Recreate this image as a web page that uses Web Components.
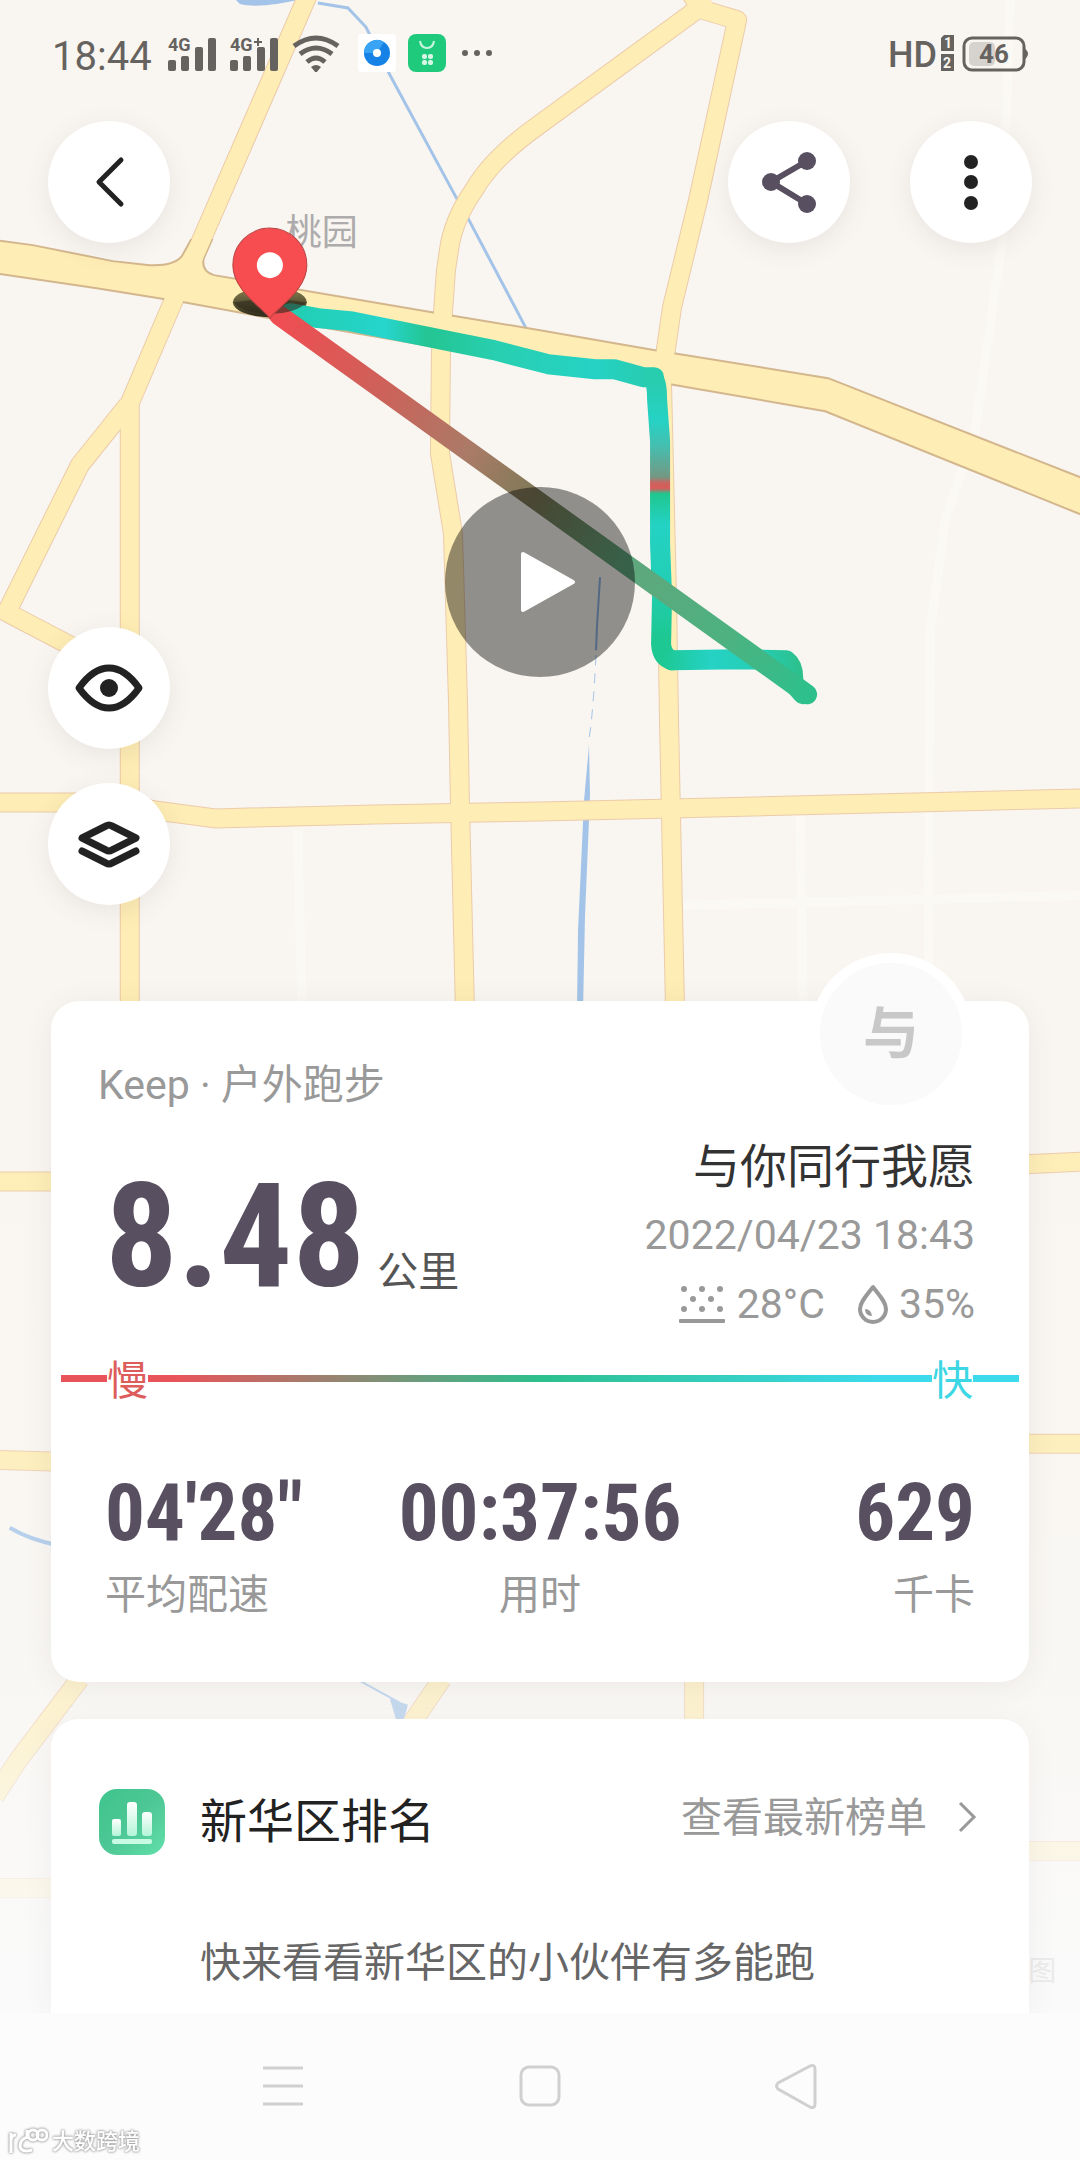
<!DOCTYPE html>
<html lang="zh-CN">
<head>
  <meta charset="utf-8">
  <meta name="viewport" content="width=device-width, initial-scale=1">
  <title>Keep · 户外跑步</title>
  <style>
    :root {
      --main-font-family: Roboto, "Noto Sans CJK SC", sans-serif;
      --number-font-family: "Roboto Condensed", Roboto, sans-serif;
      --main-text-color: #222;
      --soft-text-color: #999;
      --number-color: #584f60;
      --card-color: #fff;
    }

    body {
      margin: 0;
      font-family: var(--main-font-family);
      color: var(--main-text-color);
      background-color: #fcfcfc;
    }
  </style>
</head>
<body>
  <run-page>
    <run-map slot="map"></run-map>
    <status-bar slot="top"></status-bar>
    <tool-bar slot="top">
      <round-button label="返回">
        <svg viewBox="-61 -61 122 122"><path d="M12 -22L-10 0L12 22" fill="none" stroke="#222" stroke-width="5" stroke-linecap="round" stroke-linejoin="round"/></svg>
      </round-button>
      <round-button label="分享" slot="end">
        <svg viewBox="-61 -61 122 122" fill="#584f60"><path d="M18 -21L-18 0L18 22" fill="none" stroke="#584f60" stroke-width="6"/><circle cx="-18" r="9"/><circle cx="18" cy="-21" r="9"/><circle cx="18" cy="22" r="9"/></svg>
      </round-button>
      <round-button label="更多" slot="end">
        <svg viewBox="-61 -61 122 122" fill="#222"><circle cy="-20" r="7"/><circle r="7"/><circle cy="21" r="7"/></svg>
      </round-button>
    </tool-bar>
    <map-stage>
      <round-button label="显示地图">
        <svg viewBox="-61 -61 122 122"><path d="M-30 0C-20 -14 -10 -20 0 -20S20 -14 30 0C20 14 10 20 0 20S-20 14 -30 0Z" fill="none" stroke="#222" stroke-width="7" stroke-linejoin="round"/><circle r="9" fill="#222"/></svg>
      </round-button>
      <round-button label="图层">
        <svg viewBox="-61 -61 122 122" fill="none" stroke="#222" stroke-width="7" stroke-linecap="round" stroke-linejoin="round"><path d="M-27 -6L-3 -18Q0 -20 3 -18L27 -6L3 6Q0 8 -3 6Z"/><path d="M-27 7L-3 19Q0 21 3 19L27 7"/></svg>
      </round-button>
    </map-stage>
    <summary-card avatar="与">
      <span slot="source">Keep · 户外跑步</span>
      <span slot="distance">8.48</span>
      <span slot="unit">公里</span>
      <span slot="name">与你同行我愿</span>
      <span slot="date">2022/04/23 18:43</span>
      <span slot="temperature">28°C</span>
      <span slot="humidity">35%</span>
      <stat-item slot="stats">04'28"<span slot="label">平均配速</span></stat-item>
      <stat-item slot="stats" class="middle">00:37:56<span slot="label">用时</span></stat-item>
      <stat-item slot="stats" class="last">629<span slot="label">千卡</span></stat-item>
    </summary-card>
    <rank-card>
      <span slot="title">新华区排名</span>
      <span slot="link">查看最新榜单</span>
      快来看看新华区的小伙伴有多能跑
    </rank-card>
    <nav-bar slot="bottom"></nav-bar>
  </run-page>

  <script>
    class RunPage extends HTMLElement {
      constructor() {
        super();
        this._root = this.attachShadow({ mode: 'open' });
        this._root.innerHTML = `<style>
          :host {
            display: flex;
            flex-direction: column;
            min-height: 100vh;
          }
          .screen {
            position: relative;
            flex: 1;
            display: flex;
            flex-direction: column;
            overflow: hidden;
          }
          /* the map lies under everything else */
          .under {
            position: absolute;
            inset: 0;
          }
          .over {
            position: relative;
            flex: 1;
            display: flex;
            flex-direction: column;
          }
        </style>
        <div class="screen">
          <div class="under"><slot name="map"></slot></div>
          <main class="over">
            <slot name="top"></slot>
            <slot></slot>
          </main>
        </div>
        <slot name="bottom"></slot>`;
      }
    }
    window.customElements.define('run-page', RunPage);


    class RunMap extends HTMLElement {
      constructor() {
        super();
        this._root = this.attachShadow({ mode: 'open' });
        this._root.innerHTML = `<style>
          :host {
            display: block;
            height: 100%;
            background-color: #f9f6f1;
          }
          svg {
            display: block;
            width: 100%;
            height: 100%;
          }
          .label {
            font-family: var(--main-font-family);
            font-size: 36px;
          }
          .edge { stroke: #eccbab; fill: none; }
          .road { stroke: #feedb4; fill: none; }
        </style>
        <svg viewBox="0 0 1080 2012" preserveAspectRatio="xMidYMin slice" role="img" aria-label="跑步路线">
          <defs>
            <g id="roads" stroke-linejoin="round">
              <path d="M308 -5L192 262L173 302L130 403V1010"/>
              <path d="M128 405L80 465L7 612L72 646L132 676"/>
              <path d="M690 -8L700 9L737 20L698 200L672 307L665 355L662 385L667 600L669 723L675 1010"/>
              <path d="M710 0L540 124Q492 158 474 190Q453 220 449 250L446 270L443 313L441 353L440 453L453 533L458 700L460 803L465 1010"/>
              <path d="M-5 802H110L155 810L215 818L375 814L540 811L672 808L1085 798"/>
              <path d="M-5 1181H60M-5 1459L60 1461M1020 1164L1085 1161M1020 1443H1085"/>
              <path d="M80 1678L18 1760L-5 1795M442 1678L412 1722M694 1678V1722"/>
              <path d="M-5 1887H60M1020 1850H1085"/>
            </g>
            <linearGradient id="fade" x1="0" y1="1000" x2="0" y2="2012" gradientUnits="userSpaceOnUse">
              <stop offset="0" stop-color="#fafafa" stop-opacity="0"/>
              <stop offset=".4" stop-color="#fafafa" stop-opacity=".1"/>
              <stop offset=".7" stop-color="#fafafa" stop-opacity=".4"/>
              <stop offset=".9" stop-color="#fafafa" stop-opacity=".85"/>
              <stop offset="1" stop-color="#fafafa"/>
            </linearGradient>
            <linearGradient id="east" x1="300" y1="0" x2="655" y2="0" gradientUnits="userSpaceOnUse">
              <stop offset="0" stop-color="#22ceb4"/>
              <stop offset=".24" stop-color="#26d5cc"/>
              <stop offset=".36" stop-color="#24c592"/>
              <stop offset=".55" stop-color="#28cfb0"/>
              <stop offset=".83" stop-color="#25d2c4"/>
              <stop offset="1" stop-color="#28ccae"/>
            </linearGradient>
            <linearGradient id="south" x1="0" y1="378" x2="0" y2="660" gradientUnits="userSpaceOnUse">
              <stop offset="0" stop-color="#28ccae"/>
              <stop offset=".15" stop-color="#25d2c4"/>
              <stop offset=".24" stop-color="#45bfb0"/>
              <stop offset=".35" stop-color="#739883"/>
              <stop offset=".37" stop-color="#c96560"/>
              <stop offset=".39" stop-color="#d85c5a"/>
              <stop offset=".41" stop-color="#1fc78f"/>
              <stop offset=".52" stop-color="#24d2c4"/>
              <stop offset=".72" stop-color="#22ceb4"/>
              <stop offset=".92" stop-color="#1dc893"/>
            </linearGradient>
            <linearGradient id="finish" x1="662" y1="0" x2="800" y2="0" gradientUnits="userSpaceOnUse">
              <stop offset="0" stop-color="#1dc893"/>
              <stop offset=".35" stop-color="#25d2c4"/>
              <stop offset=".7" stop-color="#25cdb4"/>
              <stop offset="1" stop-color="#2dc08d"/>
            </linearGradient>
            <linearGradient id="direct" x1="280" y1="316" x2="807" y2="694" gradientUnits="userSpaceOnUse">
              <stop offset="0" stop-color="#f04d52"/>
              <stop offset=".2" stop-color="#cc625a"/>
              <stop offset=".36" stop-color="#aa7b67"/>
              <stop offset=".48" stop-color="#7e7a58"/>
              <stop offset=".65" stop-color="#61a67d"/>
              <stop offset=".85" stop-color="#4db280"/>
              <stop offset="1" stop-color="#2dc08d"/>
            </linearGradient>
            <linearGradient id="shade" x1="0" y1="0" x2="0" y2="1">
              <stop offset="0" stop-color="#8b8252"/>
              <stop offset="1" stop-color="#2d291a"/>
            </linearGradient>
          </defs>

          <g fill="none" stroke="#fbf9f4" stroke-width="9">
            <path d="M1010 0L1002 240L975 430L945 520L930 630L928 1010"/>
            <path d="M298 830L302 1010M800 815L803 1010M680 905L1080 895"/>
          </g>

          <g fill="none" stroke="#a3c4e8">
            <path d="M236 0H298C280 4 255 8 240 4Z" fill="#a3c4e8" stroke="none"/>
            <path d="M318 3L348 8L366 27L390 75L456 197L468 218L526 328" stroke-width="3"/>
            <path d="M600 577L597 625L596 650" stroke="#8fb4e0" stroke-width="2"/>
            <path d="M596 655L594 690L591 725L588 745" stroke-width="1" stroke-dasharray="10 8"/>
            <path d="M589 745L590 795L585 915L583 1010H577L578 930L584 800Z" fill="#a3c4e8" stroke="none"/>
            <path d="M10 1527Q30 1539 60 1545" stroke-width="4"/>
            <path d="M360 1680L400 1702" stroke-width="2"/>
            <path d="M390 1698L408 1704L403 1722H397Z" fill="#a3c4e8" stroke="none"/>
          </g>

          <use href="#roads" class="edge" stroke-width="20"/>
          <path d="M-5 240L33 245L113 261L150 265Q174 266 182 256L191 240H212L204 258Q201 271 214 275L432 312L540 330L655 350L828 378L1085 479V516L825 411L670 384L540 365L270 318L184 302L97 288L-5 273Z" fill="#feedb4" stroke="#d3b68d" stroke-width="2"/>
          <use href="#roads" class="road" stroke-width="18"/>

          <rect y="1000" width="1080" height="1012" fill="url(#fade)"/>

          <text class="label" x="286" y="245" fill="#adabac">桃园</text>
          <text x="1028" y="1980" fill="#ebebeb" font-size="28" font-family="Noto Sans CJK SC, sans-serif">图</text>

          <ellipse cx="270" cy="302" rx="37" ry="15" fill="url(#shade)"/>
          <g fill="none" stroke-width="20" stroke-linecap="round" stroke-linejoin="round">
            <path d="M290 313L318 318L350 321L444 340L494 350L548 364L595 369L614 369L643 377H654" stroke="url(#east)"/>
            <path d="M652 378Q657 380 657 399L660 441V544L662 596L661 644Q662 657 672 660" stroke="url(#south)"/>
            <path d="M672 660L738 659L786 660Q794 666 793 681L795 685L803 694" stroke="url(#finish)"/>
            <path d="M279 315L807 694" stroke="url(#direct)"/>
          </g>
          <path d="M234 302A37 15 0 0 0 306 302L290 300H250Z" fill="#2d291a" opacity=".6"/>
          <path d="M270 318C262 307 233 290 233 265A37 37 0 0 1 307 265C307 290 278 307 270 318Z" fill="#f84d50" stroke="#ba4344" stroke-width="1"/>
          <circle cx="270" cy="265" r="13" fill="#fff"/>
        </svg>`;
      }
    }
    window.customElements.define('run-map', RunMap);


    class StatusBar extends HTMLElement {
      constructor() {
        super();
        this._root = this.attachShadow({ mode: 'open' });
        this._root.innerHTML = `<style>
          :host {
            display: flex;
            justify-content: space-between;
            align-items: center;
            height: 40px;
            padding: 33px 51px 48px 52px;
            color: #66625f;
          }
          div {
            display: flex;
            align-items: center;
            gap: 14px;
          }
          .apps { gap: 12px; margin-left: 4px; }
          .right { gap: 4px; }
          time {
            font-size: 40px;
            line-height: 48px;
            padding: 8px 2px 0 0;
          }
          svg { display: block; fill: currentColor; }
          text { font-family: Roboto, sans-serif; font-weight: 700; }
          .hd { font-size: 36px; line-height: 40px; font-weight: 500; padding-top: 4px; }
        </style>
        <div>
          <time>18:44</time>
          <svg width="48" height="38" viewBox="0 0 48 38">
            <text x="0" y="17" font-size="18">4G</text>
            <rect y="26" width="8" height="11" rx="2"/><rect x="13" y="22" width="8" height="15" rx="2"/><rect x="27" y="13" width="8" height="24" rx="2"/><rect x="40" y="4" width="8" height="33" rx="2"/>
          </svg>
          <svg width="48" height="38" viewBox="0 0 48 38">
            <text x="0" y="17" font-size="18">4G</text><path d="M24 7h3v-3h2v3h3v2h-3v3h-2v-3h-3z"/>
            <rect y="26" width="8" height="11" rx="2"/><rect x="13" y="22" width="8" height="15" rx="2"/><rect x="27" y="13" width="8" height="24" rx="2"/><rect x="40" y="4" width="8" height="33" rx="2"/>
          </svg>
          <svg width="48" height="38" viewBox="0 0 48 38">
            <g fill="none" stroke="currentColor" stroke-width="5"><path d="M2 12Q24 -4 46 12"/><path d="M8 20Q24 8 40 20"/><path d="M15 28Q24 20 33 28"/></g>
            <path d="M19 33Q24 29 29 33L24 39Z"/>
          </svg>
          <div class="apps">
            <svg width="38" height="38" viewBox="0 0 38 38"><rect width="38" height="38" rx="3" fill="#fff"/><circle cx="19" cy="19" r="13" fill="#1682e6"/><path d="M6 19a13 13 0 0 1 20 -11L19 19Z" fill="#38a4f3"/><circle cx="19" cy="19" r="4" fill="#fff"/></svg>
            <svg width="38" height="38" viewBox="0 0 38 38"><rect width="38" height="38" rx="8" fill="#20ca7c"/><path d="M12 7Q13 14 19 14T26 7" fill="none" stroke="#c9f5de" stroke-width="2"/><g fill="#d6f7e6"><rect x="14" y="20" width="5" height="5" rx="2"/><rect x="20" y="20" width="5" height="5" rx="2"/><rect x="14" y="26" width="5" height="5" rx="2"/><rect x="20" y="26" width="5" height="5" rx="2"/></g></svg>
            <svg width="38" height="38" viewBox="0 0 38 38"><circle cx="7" cy="19" r="3"/><circle cx="19" cy="19" r="3"/><circle cx="31" cy="19" r="3"/></svg>
          </div>
        </div>
        <div class="right">
          <span class="hd">HD</span>
          <svg width="13" height="38" viewBox="0 0 13 38"><path d="M3 1H13V17H0V4Z"/><rect y="20" width="13" height="17"/><g fill="#f9f6f1" font-size="14"><text x="3" y="14">1</text><text x="2" y="34">2</text></g></svg>
          <svg width="71" height="38" viewBox="0 0 71 38">
            <rect x="6" y="4" width="60" height="32" rx="8" fill="none" stroke="currentColor" stroke-width="3"/>
            <rect x="11" y="8" width="26" height="24" rx="5" fill="#d6d3cf"/>
            <path d="M67 16q4 4 0 8z" stroke="currentColor" stroke-width="2"/>
            <text x="36" y="29" font-size="26" text-anchor="middle">46</text>
          </svg>
        </div>`;
      }
    }
    window.customElements.define('status-bar', StatusBar);


    class ToolBar extends HTMLElement {
      constructor() {
        super();
        this._root = this.attachShadow({ mode: 'open' });
        this._root.innerHTML = `<style>
          :host {
            display: flex;
            justify-content: space-between;
            padding: 0 48px;
          }
          .end {
            display: flex;
            gap: 60px;
          }
        </style>
        <slot></slot>
        <div class="end"><slot name="end"></slot></div>`;
      }
    }
    window.customElements.define('tool-bar', ToolBar);


    class RoundButton extends HTMLElement {
      constructor() {
        super();
        this._root = this.attachShadow({ mode: 'open' });
        this._root.innerHTML = `<style>
          :host { display: block; }
          button {
            display: block;
            width: 122px;
            height: 122px;
            padding: 0;
            border: none;
            border-radius: 50%;
            background-color: #fff;
            box-shadow: 0 6px 26px rgba(90, 70, 80, .1);
          }
          ::slotted(svg) {
            display: block;
            width: 100%;
            height: 100%;
          }
        </style>
        <button type="button"><slot></slot></button>`;
      }

      connectedCallback() {
        this._root.querySelector('button').setAttribute('aria-label', this.getAttribute('label'));
      }
    }
    window.customElements.define('round-button', RoundButton);


    class MapStage extends HTMLElement {
      constructor() {
        super();
        this._root = this.attachShadow({ mode: 'open' });
        /* play button and side tools share the same grid cell */
        this._root.innerHTML = `<style>
          :host {
            display: grid;
            padding: 244px 48px 96px;
          }
          .play, .tools { grid-area: 1 / 1; }
          .play {
            justify-self: center;
            width: 190px;
            height: 190px;
            padding: 0;
            border: none;
            border-radius: 50%;
            background-color: rgba(0, 0, 0, .42);
          }
          .play svg { display: block; }
          .tools {
            justify-self: start;
            display: grid;
            gap: 34px;
            padding-top: 140px;
          }
        </style>
        <div class="tools"><slot></slot></div>
        <button class="play" type="button" aria-label="播放">
          <svg width="190" height="190" viewBox="0 0 190 190"><path d="M78 67L128 95L78 123Z" fill="#fff" stroke="#fff" stroke-width="4" stroke-linejoin="round"/></svg>
        </button>`;
      }
    }
    window.customElements.define('map-stage', MapStage);


    class SummaryCard extends HTMLElement {
      constructor() {
        super();
        this._root = this.attachShadow({ mode: 'open' });
        this._root.innerHTML = `<style>
          :host {
            display: block;
            position: relative;
            margin: 0 51px;
            padding: 54px 0 57px;
            border-radius: 28px;
            background-color: var(--card-color);
            box-shadow: 0 4px 30px rgba(80, 70, 70, .08);
          }
          .avatar {
            position: absolute;
            top: -48px;
            right: 57px;
            box-sizing: border-box;
            width: 162px;
            height: 162px;
            border: 10px solid #fff;
            border-radius: 50%;
            background-color: #fafafa;
            color: #c8c8c8;
            font-size: 56px;
            font-weight: 700;
            line-height: 142px;
            text-align: center;
          }
          .source {
            padding-left: 47px;
            font-size: 41px;
            line-height: 60px;
            color: var(--soft-text-color);
          }
          .main {
            display: flex;
            justify-content: space-between;
            padding: 18px 54px 0 54px;
          }
          .distance {
            display: flex;
            align-items: baseline;
            gap: 12px;
          }
          .number {
            font-family: var(--number-font-family);
            font-size: 144px;
            line-height: 208px;
            font-weight: 700;
            color: var(--number-color);
          }
          .unit { font-size: 41px; color: #555; }
          .info {
            text-align: right;
            font-size: 41px;
            line-height: 68px;
            color: var(--soft-text-color);
          }
          .name {
            font-size: 47px;
            color: #333;
          }
          .weather {
            display: flex;
            justify-content: flex-end;
            align-items: center;
            line-height: 70px;
          }
          .weather svg { display: block; margin-right: 12px; }
          .weather .drop { margin-left: 32px; margin-right: 10px; }
          .pace {
            display: flex;
            justify-content: space-between;
            margin: 10px 10px 0;
            padding: 0 46px;
            font-size: 41px;
            line-height: 60px;
            background: linear-gradient(90deg, #e9545a 12%, #2dc08d 50%, #3cdaea 85%) 0 24px / 100% 7px no-repeat;
          }
          .pace span { background-color: var(--card-color); }
          .slow { color: #dd5c5c; }
          .fast { color: #3cd6e4; }
          .stats {
            display: grid;
            grid-template-columns: 1fr auto 1fr;
            padding: 62px 54px 0 54px;
          }
        </style>
        <div class="avatar"></div>
        <div class="source"><slot name="source"></slot></div>
        <div class="main">
          <div class="distance">
            <span class="number"><slot name="distance"></slot></span>
            <span class="unit"><slot name="unit"></slot></span>
          </div>
          <div class="info">
            <div class="name"><slot name="name"></slot></div>
            <div><slot name="date"></slot></div>
            <div class="weather">
              <svg width="46" height="40" viewBox="0 0 46 40" fill="#999"><circle cx="5" cy="5" r="3"/><circle cx="23" cy="5" r="3"/><circle cx="41" cy="5" r="3"/><circle cx="14" cy="15" r="3"/><circle cx="32" cy="15" r="3"/><circle cx="5" cy="25" r="3"/><circle cx="23" cy="25" r="3"/><circle cx="41" cy="25" r="3"/><rect y="35" width="46" height="4" rx="1"/></svg>
              <slot name="temperature"></slot>
              <svg class="drop" width="32" height="42" viewBox="0 0 32 42"><path d="M16 4C10 12 3 19 3 26A13 13 0 0 0 29 26C29 19 22 12 16 4Z" fill="none" stroke="#999" stroke-width="4" stroke-linejoin="round"/><path d="M8 26Q14 26 15 33Q8 33 8 26Z" fill="#999"/></svg>
              <slot name="humidity"></slot>
            </div>
          </div>
        </div>
        <div class="pace"><span class="slow">慢</span><span class="fast">快</span></div>
        <div class="stats"><slot name="stats"></slot></div>`;
      }

      connectedCallback() {
        this._root.querySelector('.avatar').textContent = this.getAttribute('avatar');
      }
    }
    window.customElements.define('summary-card', SummaryCard);


    class StatItem extends HTMLElement {
      constructor() {
        super();
        this._root = this.attachShadow({ mode: 'open' });
        this._root.innerHTML = `<style>
          :host { display: block; }
          :host(.middle) { text-align: center; }
          :host(.last) { text-align: right; }
          .value {
            font-family: var(--number-font-family);
            font-size: 79px;
            line-height: 80px;
            font-weight: 700;
            color: var(--number-color);
          }
          .label {
            margin-top: 12px;
            font-size: 41px;
            line-height: 60px;
            color: var(--soft-text-color);
          }
        </style>
        <div class="value"><slot></slot></div>
        <div class="label"><slot name="label"></slot></div>`;
      }
    }
    window.customElements.define('stat-item', StatItem);


    class RankCard extends HTMLElement {
      constructor() {
        super();
        this._root = this.attachShadow({ mode: 'open' });
        this._root.innerHTML = `<style>
          :host {
            display: block;
            flex: 1;
            margin: 37px 51px 0;
            padding: 70px 52px 20px 48px;
            border-radius: 28px 28px 0 0;
            background-color: var(--card-color);
            box-shadow: 0 4px 30px rgba(80, 70, 70, .06);
          }
          header {
            display: flex;
            align-items: flex-start;
          }
          svg { display: block; }
          h3 {
            margin: 0 auto 0 35px;
            font-size: 47px;
            line-height: 66px;
            font-weight: 400;
          }
          a {
            display: flex;
            align-items: center;
            gap: 30px;
            font-size: 41px;
            line-height: 58px;
            color: var(--soft-text-color);
            text-decoration: none;
          }
          p {
            margin: 78px 0 0 101px;
            font-size: 41px;
            line-height: 60px;
            color: #666;
          }
        </style>
        <header>
          <svg width="66" height="66" viewBox="0 0 66 66">
            <defs>
              <linearGradient id="tile" x1="0" y1="0" x2="1" y2="1"><stop offset="0" stop-color="#3fc48c"/><stop offset=".5" stop-color="#4dc795"/><stop offset="1" stop-color="#62dfaa"/></linearGradient>
              <linearGradient id="bar" x1="0" y1="0" x2="0" y2="1"><stop offset="0" stop-color="#fff"/><stop offset="1" stop-color="#b4f5d8"/></linearGradient>
            </defs>
            <rect width="66" height="66" rx="18" fill="url(#tile)"/>
            <g fill="url(#bar)"><rect x="13" y="30" width="9" height="17" rx="2"/><rect x="28" y="13" width="10" height="34" rx="3"/><rect x="43" y="23" width="10" height="24" rx="3"/></g>
            <rect x="13" y="50" width="40" height="5" rx="2" fill="#c9fae4"/>
          </svg>
          <h3><slot name="title"></slot></h3>
          <a href="#rank">
            <slot name="link"></slot>
            <svg width="20" height="34" viewBox="0 0 20 34"><path d="M3 2L17 16L3 30" fill="none" stroke="#999" stroke-width="3"/></svg>
          </a>
        </header>
        <p><slot></slot></p>`;
      }
    }
    window.customElements.define('rank-card', RankCard);


    class NavBar extends HTMLElement {
      constructor() {
        super();
        this._root = this.attachShadow({ mode: 'open' });
        this._root.innerHTML = `<style>
          :host {
            display: block;
            position: relative;
            background-color: #fcfcfc;
          }
          nav {
            display: flex;
            justify-content: center;
            align-items: center;
            gap: 209px;
            height: 148px;
          }
          button {
            padding: 0;
            border: none;
            background: none;
          }
          svg {
            display: block;
            fill: none;
            stroke: #d0d0d0;
            stroke-width: 3;
          }
          .mark {
            position: absolute;
            left: 8px;
            bottom: 4px;
            display: flex;
            align-items: center;
            gap: 4px;
            color: #fff;
            font-size: 22px;
            line-height: 30px;
            font-weight: 500;
            filter: drop-shadow(0 0 1px #999) drop-shadow(0 0 1px #bbb);
          }
          .mark svg { stroke: #fff; }
        </style>
        <nav>
          <button type="button" aria-label="菜单"><svg width="48" height="48" viewBox="0 0 48 48"><path d="M4 5H44M4 23H44M4 41H44"/></svg></button>
          <button type="button" aria-label="主页"><svg width="48" height="48" viewBox="0 0 48 48"><rect x="5" y="4" width="38" height="38" rx="8"/></svg></button>
          <button type="button" aria-label="后退"><svg width="48" height="48" viewBox="0 0 48 48"><path d="M5 20Q2 23 5 26L37 44Q42 46 42 41V6Q42 1 37 3Z"/></svg></button>
        </nav>
        <div class="mark">
          <svg width="40" height="30" viewBox="0 0 40 30"><path d="M3 6V26M3 14Q3 8 8 8M20 10Q12 12 12 19Q13 26 24 23M19 3V12"/><circle cx="25" cy="8" r="5"/><circle cx="34" cy="8" r="5"/></svg>
          <span>大数跨境</span>
        </div>`;
      }
    }
    window.customElements.define('nav-bar', NavBar);
  </script>
</body>
</html>
